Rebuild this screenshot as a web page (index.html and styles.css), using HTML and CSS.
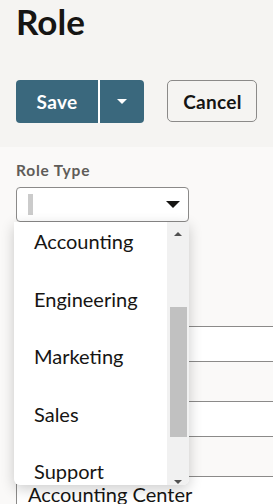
FILE: index.html
```html
<!DOCTYPE html>
<html lang="en">
<head>
  <meta charset="UTF-8">
  <meta name="viewport" content="width=device-width, initial-scale=1.0">
  <title>Role</title>
  <link rel="stylesheet" href="styles.css">
</head>
<body>
  <header class="page-head">
    <h1 class="title">Role</h1>
    <div class="toolbar">
      <div class="split-btn">
        <button class="btn-primary">Save</button>
        <button class="btn-primary btn-menu" aria-label="More save options"><span class="caret"></span></button>
      </div>
      <button class="btn-outline">Cancel</button>
    </div>
  </header>

  <main class="form">
    <div class="field">
      <label class="field-label">Role Type</label>
      <div class="select-wrap">
        <div class="select">
          <span class="select-cursor"></span>
          <span class="select-arrow"></span>
        </div>

        <div class="popup">
          <ul class="options">
            <li>Accounting</li>
            <li>Engineering</li>
            <li>Marketing</li>
            <li>Sales</li>
            <li>Support</li>
          </ul>
          <div class="scrollbar">
            <span class="sb-up"></span>
            <span class="sb-thumb"></span>
            <span class="sb-down"></span>
          </div>
        </div>
      </div>
    </div>

    <div class="text-input first"></div>
    <div class="text-input"></div>
    <div class="text-input">Accounting Center</div>
  </main>
</body>
</html>
```

FILE: styles.css
```css
* {
  box-sizing: border-box;
}
body {
  margin: 0;
  height: 504px;
  overflow: hidden;
  background: #faf9f8;
  color: #161513;
  font-family: Lato, "Liberation Sans", sans-serif;
}
.page-head {
  height: 147px;
  padding: 0 16px;
  background: #f5f4f2;
}
.title {
  margin: 0;
  font-size: 35px;
  line-height: 42px;
  font-weight: 700;
  color: #161513;
}
.toolbar {
  display: flex;
  gap: 23px;
  margin-top: 38px;
}
.split-btn {
  display: flex;
}
.btn-primary {
  height: 43px;
  width: 82px;
  border: none;
  border-radius: 4px 0 0 4px;
  background: #3a687d;
  color: #fff;
  font-family: inherit;
  font-size: 19px;
  font-weight: 700;
  letter-spacing: 0.3px;
  padding: 0;
}
.btn-menu {
  width: 46px;
  border-left: 2px solid #fff;
  border-radius: 0 4px 4px 0;
  display: flex;
  align-items: center;
  justify-content: center;
}
.caret {
  width: 0;
  height: 0;
  border-left: 5.5px solid transparent;
  border-right: 5.5px solid transparent;
  border-top: 5px solid #fff;
}
.btn-outline {
  height: 42px;
  width: 101px;
  border: 1px solid #8b8a89;
  border-radius: 5px;
  background: #f5f4f2;
  color: #161513;
  font-family: inherit;
  font-size: 19px;
  font-weight: 700;
  letter-spacing: 0.3px;
  padding: 0 0 0 1px;
}

.form {
  padding: 14px 16px 0;
}
.field-label {
  display: block;
  font-size: 15.5px;
  line-height: 18px;
  font-weight: 700;
  letter-spacing: 0.8px;
  color: #5f5c59;
}
.select-wrap {
  position: relative;
  width: 173px;
  margin-top: 8px;
}
.select {
  height: 35px;
  display: flex;
  align-items: center;
  justify-content: space-between;
  padding: 0 8px 0 11px;
  background: #fff;
  border: 1px solid #8b8a89;
  border-radius: 4px;
}
.select-cursor {
  width: 5px;
  height: 21px;
  background: #cbcbcb;
}
.select-arrow {
  width: 0;
  height: 0;
  border-left: 7px solid transparent;
  border-right: 7px solid transparent;
  border-top: 7px solid #161513;
}

.popup {
  position: absolute;
  z-index: 2;
  top: 100%;
  left: -2px;
  width: 175px;
  height: 263px;
  background: #fff;
  border-radius: 0 0 6px 6px;
  box-shadow: 0 4px 14px rgba(0, 0, 0, 0.2);
  overflow: hidden;
}
.options {
  list-style: none;
  margin: -9px 0 0;
  padding: 0;
}
.options li {
  height: 57.5px;
  line-height: 57.5px;
  padding-left: 20px;
  font-size: 20px;
  color: #161513;
}
.scrollbar {
  position: absolute;
  top: 0;
  right: 0;
  bottom: 0;
  width: 22px;
  background: #f1f1f1;
}
.sb-thumb {
  position: absolute;
  left: 3px;
  top: 85px;
  width: 17px;
  height: 130px;
  background: #c1c1c1;
}
.sb-up,
.sb-down {
  position: absolute;
  left: 7px;
  width: 0;
  height: 0;
  border-left: 4.5px solid transparent;
  border-right: 4.5px solid transparent;
}
.sb-up {
  top: 10px;
  border-bottom: 4px solid #505050;
}
.sb-down {
  top: 258px;
  border-top: 4px solid #505050;
}

.text-input {
  width: 300px;
  height: 36px;
  margin-top: 39px;
  padding-left: 11px;
  background: #fff;
  border: 1px solid #8b8a89;
  border-right: none;
  border-radius: 4px 0 0 4px;
  font-size: 20px;
  line-height: 34px;
  color: #161513;
}
.text-input.first {
  margin-top: 104px;
}
```
